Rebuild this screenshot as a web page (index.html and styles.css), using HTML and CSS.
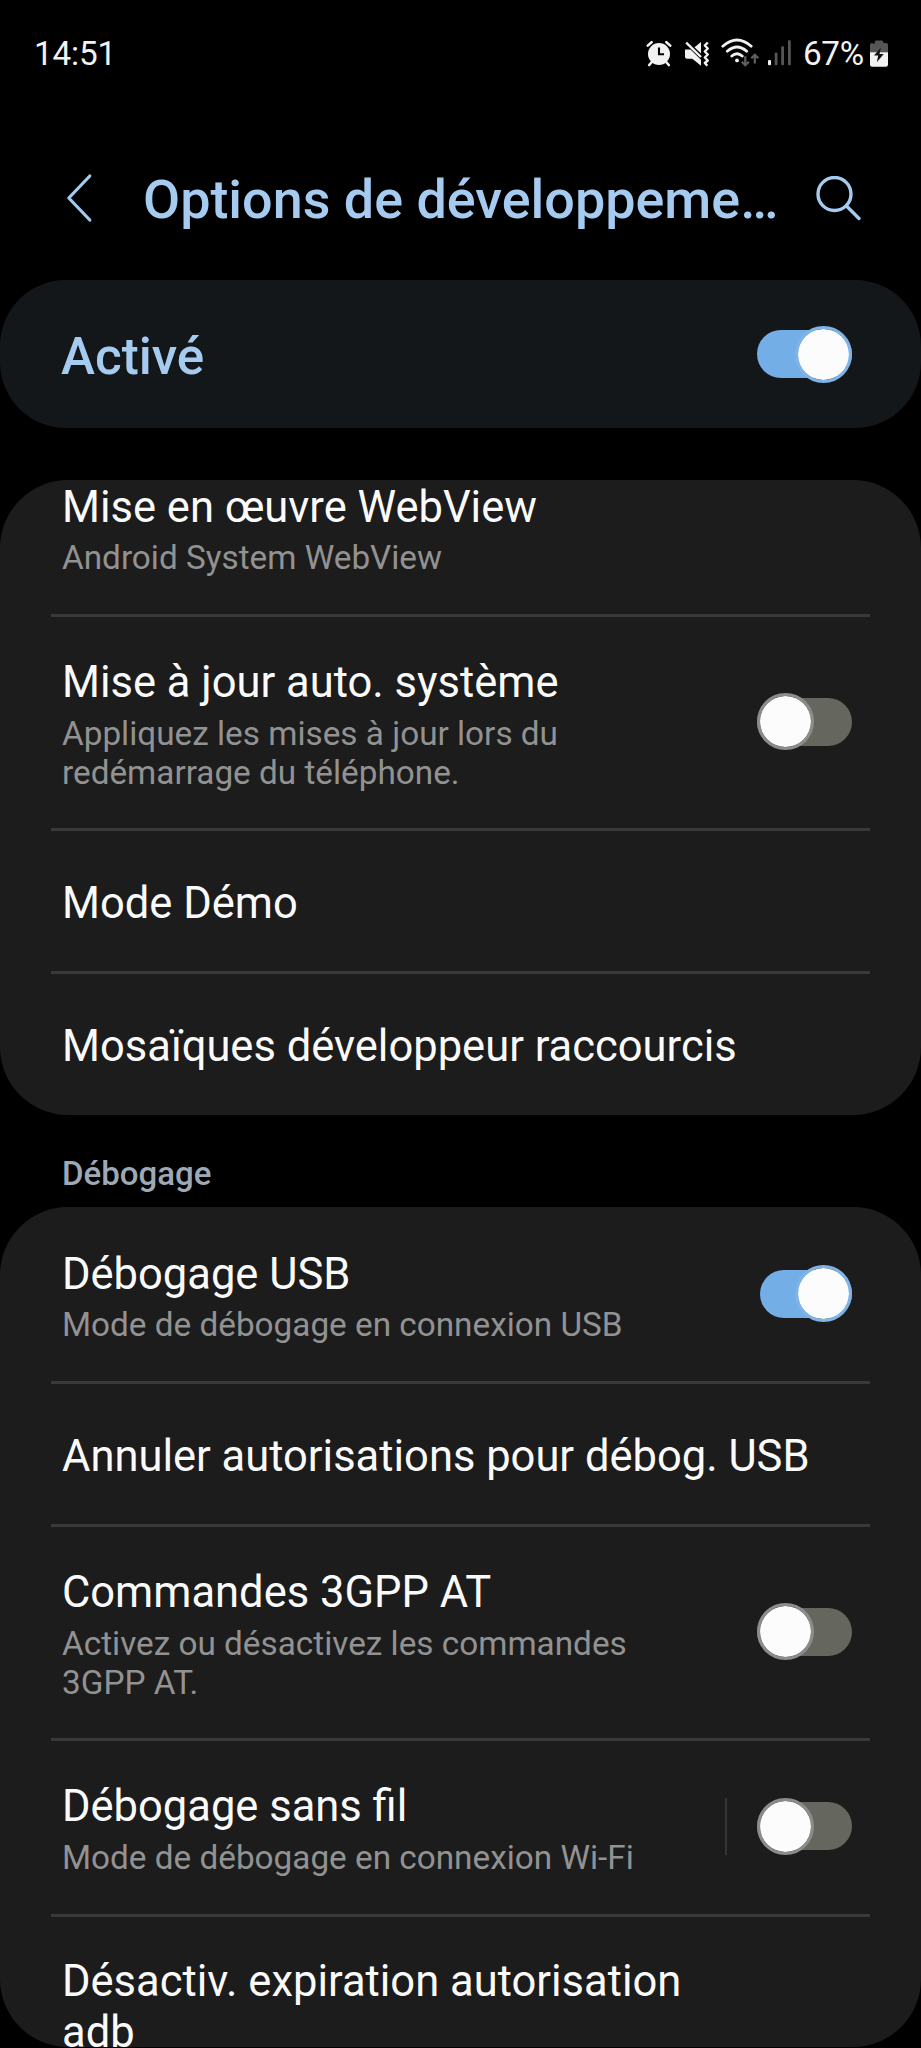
FILE: index.html
```html
<!DOCTYPE html>
<html lang="fr">
<head>
<meta charset="utf-8">
<title>Options de développement</title>
<link rel="stylesheet" href="styles.css">
</head>
<body>
<div class="screen">
  <div class="statusbar">
    <span class="clock">14:51</span>
    <div class="status-icons">
      <svg class="alarm" width="26" height="28" viewBox="0 0 26 28">
        <g stroke="#f2f2f2" stroke-width="2.6" stroke-linecap="round" fill="none"><path d="M1.8 5.6 5.6 2.2M24.2 5.6 20.4 2.2M5.4 22.5 3.2 25M20.6 22.5 22.8 25"/></g>
        <circle cx="13" cy="14" r="11" fill="#f2f2f2"/>
        <path d="M13 7.5V14.3H18" stroke="#000" stroke-width="2.1" fill="none"/>
      </svg>
      <svg class="mute" width="28" height="28" viewBox="0 0 28 28">
        <path d="M2 9.5H7.5L18 19.8V25.8L9.3 18.7H4Q2 18.7 2 16.7ZM11.5 7.2 18 2V13.5Z" fill="#f2f2f2"/>
        <path d="M3.2 2.6 18 17" stroke="#f2f2f2" stroke-width="2.4" fill="none"/>
        <path d="M24.8 2.5 21.8 5.5 24.8 8.5 21.8 11.5 24.8 14.5 21.8 17.5 24.8 20.5 21.8 23 24.3 25.7" stroke="#f2f2f2" stroke-width="2.4" fill="none" stroke-linejoin="round"/>
      </svg>
      <svg class="wifi" width="40" height="30" viewBox="0 0 40 30">
        <g stroke="#f2f2f2" stroke-width="2.8" stroke-linecap="round" fill="none">
          <path d="M2.8 8.2Q17 -4.2 31.2 8.2M7.3 13.2Q17 4.8 26.7 13.2M11.8 18Q17 13.6 22.2 18"/>
        </g>
        <circle cx="17" cy="22.4" r="1.9" fill="#f2f2f2"/>
        <path d="M25.3 18.3V27M21.8 23.7 25.3 27.2 28.8 23.7M34.8 25.6V17M31.3 20.3 34.8 16.8 38.3 20.3" stroke="#606060" stroke-width="2.2" fill="none"/>
      </svg>
      <svg class="signal" width="24" height="28" viewBox="0 0 24 28">
        <rect x="0" y="20" width="3" height="5.2" rx="1" fill="#f2f2f2"/>
        <g fill="#555"><rect x="6.7" y="12.5" width="2.8" height="12.7" rx="1"/><rect x="13.2" y="6.3" width="2.8" height="18.9" rx="1"/><rect x="20" y="0.3" width="2.8" height="24.9" rx="1"/></g>
      </svg>
      <span class="percent">67%</span>
      <svg class="battery" width="18" height="28" viewBox="0 0 18 28">
        <path d="M4.7 4V2Q4.7 .4 6.3 .4H11.7Q13.3 .4 13.3 2V3H16Q18 3 18 5V12.5H0V5Q0 3 2 3Z" fill="#555"/>
        <path d="M0 12.3H18V24.5Q18 26.7 15.8 26.7H2.2Q0 26.7 0 24.5Z" fill="#f2f2f2"/>
        <path d="M10.7 7.8 4 15.6H8.2L6.8 22.2 13.7 14H9.5Z" fill="#111"/>
      </svg>
    </div>
  </div>

  <header class="header">
    <svg class="back" width="28" height="50" viewBox="0 0 28 50"><path d="M24.8 3 3.8 25 24.8 47" fill="none" stroke="#a6cbf0" stroke-width="3.2" stroke-linecap="round" stroke-linejoin="round"/></svg>
    <h1 class="title">Options de développeme…</h1>
    <svg class="search" width="46" height="46" viewBox="0 0 46 46"><g fill="none" stroke="#a6cbf0" stroke-width="3.4" stroke-linecap="round"><circle cx="18.5" cy="18" r="16.5"/><path d="M30.5 30 43 42.5"/></g></svg>
  </header>

  <div class="master">
    <span class="master-label">Activé</span>
    <div class="switch on"><div class="thumb"></div></div>
  </div>

  <section class="card card-top">
    <div class="row row-scrolled">
      <div class="text"><div class="name">Mise en œuvre WebView</div><div class="desc">Android System WebView</div></div>
    </div>
    <div class="row row-tall">
      <div class="text"><div class="name">Mise à jour auto. système</div><div class="desc">Appliquez les mises à jour lors du<br>redémarrage du téléphone.</div></div>
      <div class="switch"><div class="thumb"></div></div>
    </div>
    <div class="row row-single">
      <div class="text"><div class="name">Mode Démo</div></div>
    </div>
    <div class="row row-single last">
      <div class="text"><div class="name">Mosaïques développeur raccourcis</div></div>
    </div>
  </section>

  <h2 class="category">Débogage</h2>

  <section class="card card-debug">
    <div class="row row-first">
      <div class="text"><div class="name">Débogage USB</div><div class="desc">Mode de débogage en connexion USB</div></div>
      <div class="switch on short"><div class="thumb"></div></div>
    </div>
    <div class="row row-single">
      <div class="text"><div class="name">Annuler autorisations pour débog. USB</div></div>
    </div>
    <div class="row row-tall">
      <div class="text"><div class="name">Commandes 3GPP AT</div><div class="desc">Activez ou désactivez les commandes<br>3GPP AT.</div></div>
      <div class="switch"><div class="thumb"></div></div>
    </div>
    <div class="row row-double">
      <div class="text"><div class="name">Débogage sans fil</div><div class="desc">Mode de débogage en connexion Wi-Fi</div></div>
      <div class="separator"></div>
      <div class="switch"><div class="thumb"></div></div>
    </div>
    <div class="row row-double last">
      <div class="text"><div class="name">Désactiv. expiration autorisation<br>adb</div></div>
    </div>
  </section>
</div>
</body>
</html>
```

FILE: styles.css
```css
* { box-sizing: border-box; }

body {
  margin: 0;
  background: #000;
  color: #fafafa;
  font-family: Roboto, "Liberation Sans", sans-serif;
}

.screen {
  display: flex;
  flex-direction: column;
  width: 921px;
  height: 2048px;
  overflow: hidden;
}

.statusbar {
  display: flex;
  justify-content: space-between;
  flex: none;
  height: 105px;
  padding: 34px 33px 0 34px;
  font-size: 33.3px;
  line-height: 39px;
  color: #f2f2f2;
}

.clock { letter-spacing: -0.2px; }
.status-icons { display: flex; padding-top: 6px; }
.status-icons svg { flex: none; display: block; }
.mute { margin-left: 11px; }
.wifi { margin-left: 9px; margin-top: -2px; }
.signal { margin-left: 8px; }
.percent { margin: -6px 7px 0 11px; width: 60px; letter-spacing: -0.4px; white-space: nowrap; }

.header {
  display: flex;
  flex: none;
  height: 175px;
  padding: 0 59px 0 65px;
}

.back { flex: none; margin-top: 68px; }

.title {
  flex: 1;
  margin: 64px 0 0 50px;
  font-size: 53.9px;
  line-height: 62px;
  font-weight: 500;
  color: #a6cbf0;
  white-space: nowrap;
}

.search { flex: none; margin-top: 71px; }

.master {
  display: flex;
  align-items: center;
  justify-content: space-between;
  flex: none;
  height: 148px;
  padding: 0 69px 0 61px;
  border-radius: 66px;
  background: #13171a;
}

.master-label {
  padding-top: 5px;
  font-size: 51.2px;
  line-height: 60px;
  font-weight: 500;
  color: #a6cbf0;
}

.card {
  flex: none;
  overflow: hidden;
  border-radius: 68px;
  background: #1c1c1c;
}

.card-top { height: 635px; margin-top: 52px; }
.card-debug { height: 840px; }

.row {
  display: flex;
  align-items: center;
  margin: 0 51px;
  padding: 0 18px 0 11px;
  border-bottom: 3px solid #393939;
}

.row.last { border-bottom: 0; }
.row-scrolled { height: 137px; }
.row-tall { height: 214px; }
.row-single { height: 143px; }
.row-first { height: 177px; }
.row-double { height: 175.5px; }

.text { flex: 1; align-self: flex-start; padding-top: 39.5px; white-space: nowrap; }
.row-scrolled .text { padding-top: 2px; }
.row-single .text { padding-top: 46.5px; }
.row-first .text { padding-top: 42px; }
.row-scrolled .desc, .row-first .desc { margin-top: 5px; }

.name { font-size: 43.5px; line-height: 51px; }
.desc { margin-top: 6px; font-size: 33.3px; line-height: 39px; color: #929292; }

.switch {
  display: flex;
  align-items: center;
  flex: none;
  width: 95px;
  height: 48px;
  margin-bottom: 2px;
  border-radius: 24px;
  background: #65675f;
}

.thumb {
  flex: none;
  width: 57px;
  height: 57px;
  border: 3px solid #8c8c8b;
  border-radius: 50%;
  background: #fcfcfc;
  background-clip: padding-box;
}

.master .switch { margin-bottom: 0; }
.switch.on { justify-content: flex-end; background: #74aee6; }
.switch.on .thumb { border-color: #80b3e6; }
.switch.short { width: 92px; margin-bottom: 1px; }

.separator { width: 2px; height: 57px; margin: 0 30px 2px 0; background: #353535; }

.category {
  flex: none;
  height: 92px;
  margin: 0;
  padding: 39px 0 0 62px;
  font-size: 33px;
  line-height: 39px;
  font-weight: 500;
  color: #9ea9b6;
}
```
